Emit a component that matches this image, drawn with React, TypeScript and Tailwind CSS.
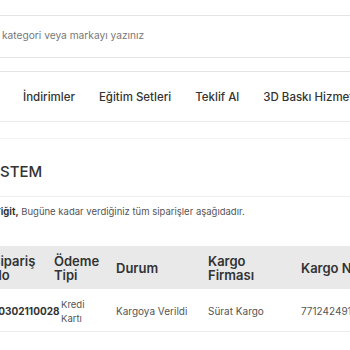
import React from 'react';

const NAV = ['İndirimler', 'Eğitim Setleri', 'Teklif Al', '3D Baskı Hizmetleri'];

const App = () => {
  return (
    <div className="w-[350px] h-[350px] overflow-hidden bg-white text-[#333] font-['Inter',sans-serif]">
      {/* Search */}
      <div className="h-[15px]" />
      <div className="border-t border-[#e4e4e4] h-[42px] flex items-center pl-[2px] pb-[2px]">
        <span className="text-[10.2px] text-[#777] whitespace-nowrap">kategori veya markayı yazınız</span>
      </div>
      <div className="border-t border-[#e4e4e4] h-[14px]" />

      {/* Nav */}
      <div className="border-t border-[#e4e4e4] h-[50px] flex items-center gap-[24px] pl-[23px] pt-[2px] whitespace-nowrap">
        {NAV.map(item => (
          <span key={item} className="text-[11.5px] font-medium text-[#333]">{item}</span>
        ))}
      </div>
      <div className="border-t border-[#ececec] h-[17px]" />

      {/* Title */}
      <div className="border-t border-[#f4f4f4] h-[58px] flex items-center pt-[10px]">
        <h1 className="text-[15px] font-medium text-[#333]">STEM</h1>
      </div>
      <div className="border-t border-[#f0f0f0] h-[32px] flex items-center whitespace-nowrap">
        <p className="text-[9.5px] text-[#555] -ml-[6px]">
          <span className="font-bold text-[#333]">Yiğit,</span> Bugüne kadar verdiğiniz tüm siparişler aşağıdadır.
        </p>
      </div>
      <div className="h-[18px]" />

      {/* Table */}
      <div className="-ml-[8px] w-[400px]">
        <div className="flex items-center h-[43px] bg-[#e9e9e9] text-[13px] font-semibold leading-[14px] text-[#333]">
          <div className="w-[62px]">Sipariş<br />No</div>
          <div className="w-[62px]">Ödeme<br />Tipi</div>
          <div className="w-[92px]">Durum</div>
          <div className="w-[93px]">Kargo<br />Firması</div>
          <div className="whitespace-nowrap">Kargo No</div>
        </div>
        <div className="flex items-center h-[43px] pt-[3px] border-b border-[#ececec] text-[10px] text-[#555] whitespace-nowrap">
          <div className="w-[69px] font-bold text-[#333]">20302110028</div>
          <div className="w-[55px] text-[9.5px] leading-[14px] whitespace-normal">Kredi<br />Kartı</div>
          <div className="w-[92px]">Kargoya Verildi</div>
          <div className="w-[93px]">Sürat Kargo</div>
          <div>7712424910</div>
        </div>
      </div>
    </div>
  );
};

export default App;
